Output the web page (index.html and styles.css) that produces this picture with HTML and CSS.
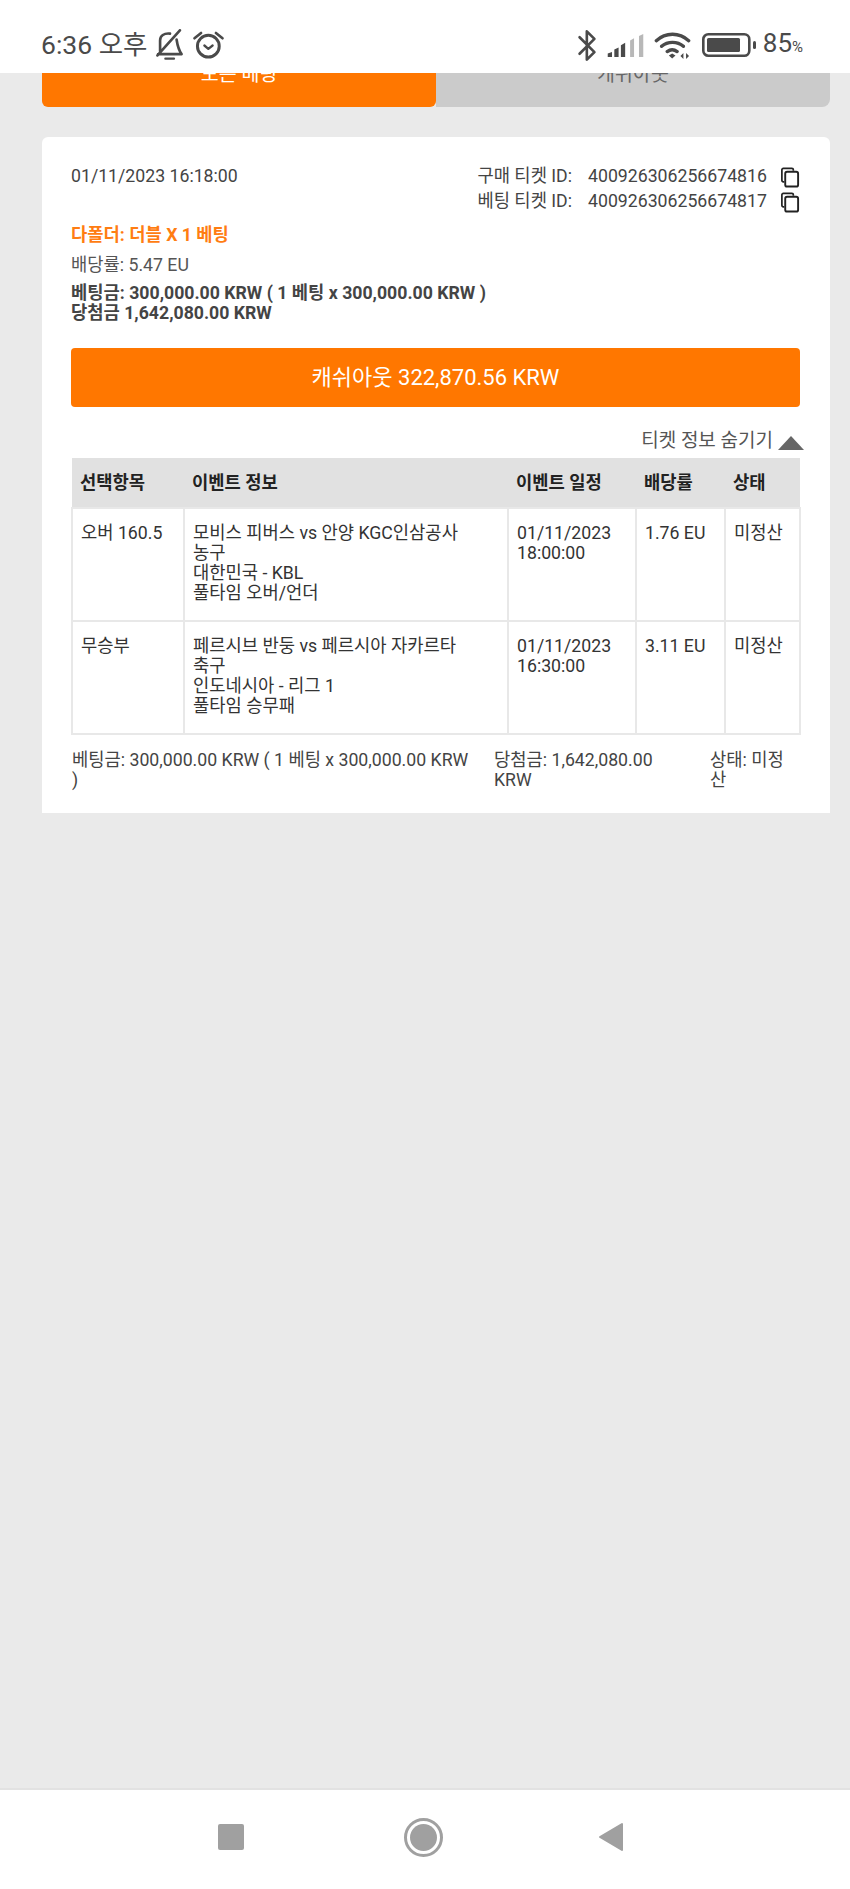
FILE: index.html
```html
<!DOCTYPE html>
<html lang="ko">
<head>
<meta charset="utf-8">
<title>베팅 내역</title>
<link rel="stylesheet" href="styles.css">
</head>
<body>
<div class="app">
  <header class="status">
    <div class="status-left">
      <span class="time">6:36 오후</span>
      <svg class="ic-bell" viewBox="10 10 90 100"><path d="M28 78V45C28 30 40 22 58 24M78 42c2 13 4 28 15 44H22M88 14 20 90" fill="none" stroke="#4a4a4a" stroke-width="8" stroke-linecap="round" stroke-linejoin="round"/><path d="M44 100h26" stroke="#4a4a4a" stroke-width="7" stroke-linecap="round"/></svg>
      <svg class="ic-alarm" viewBox="120 10 105 100"><circle cx="172" cy="62" r="33" fill="none" stroke="#4a4a4a" stroke-width="9"/><path d="m130 38 20-16M215 38l-20-16" stroke="#4a4a4a" stroke-width="8" stroke-linecap="round"/><path d="m160 60 12 10 13-10" fill="none" stroke="#4a4a4a" stroke-width="7" stroke-linecap="round" stroke-linejoin="round"/></svg>
    </div>
    <div class="status-right">
      <svg class="ic-bt" viewBox="15 15 65 100"><path d="m25 40 45 45-23 23V22l23 23-45 45" fill="none" stroke="#4a4a4a" stroke-width="8" stroke-linecap="round" stroke-linejoin="round"/></svg>
      <svg class="ic-signal" viewBox="105 25 118 76"><path d="M110 87l13-4v15h-13zM130 75l13-6v29h-13zM150 62l13-7v43h-13z" fill="#4a4a4a"/><path d="M178 48l12-7v57h-12zM205 34l13-6v70h-13z" fill="#b8b8b8"/></svg>
      <svg class="ic-wifi" viewBox="250 15 115 90"><path d="M257 47c28-26 70-26 98 0M273 64c18-16 48-16 66 0M290 80c9-7 21-7 30 0" fill="none" stroke="#4a4a4a" stroke-width="10" stroke-linecap="round"/><path d="m295 92 10-6 10 6-10 9z" fill="#4a4a4a"/><path d="M339 84v18l-9-9zM347 102V84l9 9z" fill="#4a4a4a"/></svg>
      <svg class="ic-batt" viewBox="0 0 54 24"><rect x="1.300" y="1.300" width="46" height="21.400" rx="5" fill="none" stroke="#4a4a4a" stroke-width="2.600"/><rect x="5" y="5" width="33" height="14" rx="1.500" fill="#4a4a4a"/><rect x="51" y="8" width="3" height="8" rx="1.500" fill="#4a4a4a"/></svg>
      <span class="pct">85<small>%</small></span>
    </div>
  </header>

  <main class="content">
    <nav class="tabs">
      <div class="tab tab-on">모든 베팅</div>
      <div class="tab tab-off">캐쉬아웃</div>
    </nav>

    <section class="card">
      <div class="meta">
        <div class="stamp">01/11/2023 16:18:00</div>
        <div class="ids">
          <div class="id-row">
            <span class="id-label">구매 티켓 ID:</span><span class="id-num">400926306256674816</span>
            <svg class="ic-copy" viewBox="0 0 20 22"><path d="M4 15.500H3a1.500 1.500 0 0 1-1.500-1.500V3A1.500 1.500 0 0 1 3 1.500h9A1.500 1.500 0 0 1 13.500 3v1" fill="none" stroke="#222" stroke-width="1.800"/><rect x="5" y="5" width="13.500" height="15.500" rx="2" fill="#fff" stroke="#222" stroke-width="2"/></svg>
          </div>
          <div class="id-row">
            <span class="id-label">베팅 티켓 ID:</span><span class="id-num">400926306256674817</span>
            <svg class="ic-copy" viewBox="0 0 20 22"><path d="M4 15.500H3a1.500 1.500 0 0 1-1.500-1.500V3A1.500 1.500 0 0 1 3 1.500h9A1.500 1.500 0 0 1 13.500 3v1" fill="none" stroke="#222" stroke-width="1.800"/><rect x="5" y="5" width="13.500" height="15.500" rx="2" fill="#fff" stroke="#222" stroke-width="2"/></svg>
          </div>
        </div>
      </div>

      <div class="bet-type">다폴더: 더블 X 1 베팅</div>
      <div class="odds">배당률: 5.47 EU</div>
      <div class="totals">
        <div>베팅금: 300,000.00 KRW ( 1 베팅 x 300,000.00 KRW )</div>
        <div>당첨금 1,642,080.00 KRW</div>
      </div>

      <button class="cashout" type="button">캐쉬아웃 322,870.56 KRW</button>

      <div class="toggle">
        <span>티켓 정보 숨기기</span>
        <span class="tri"></span>
      </div>

      <table class="legs">
        <colgroup>
          <col class="c1"><col class="c2"><col class="c3"><col class="c4"><col class="c5">
        </colgroup>
        <thead>
          <tr><th>선택항목</th><th>이벤트 정보</th><th>이벤트 일정</th><th>배당률</th><th>상태</th></tr>
        </thead>
        <tbody>
          <tr>
            <td>오버 160.5</td>
            <td>모비스 피버스 vs 안양 KGC인삼공사<br>농구<br>대한민국 - KBL<br>풀타임 오버/언더</td>
            <td>01/11/2023<br>18:00:00</td>
            <td>1.76 EU</td>
            <td>미정산</td>
          </tr>
          <tr>
            <td>무승부</td>
            <td>페르시브 반둥 vs 페르시아 자카르타<br>축구<br>인도네시아 - 리그 1<br>풀타임 승무패</td>
            <td>01/11/2023<br>16:30:00</td>
            <td>3.11 EU</td>
            <td>미정산</td>
          </tr>
        </tbody>
      </table>

      <div class="summary">
        <div>베팅금: 300,000.00 KRW ( 1 베팅 x 300,000.00 KRW )</div>
        <div>당첨금: 1,642,080.00 KRW</div>
        <div>상태: 미정산</div>
      </div>
    </section>
  </main>

  <footer class="navbar">
    <span class="nav-square"></span>
    <span class="nav-home"><span class="nav-dot"></span></span>
    <svg class="nav-back" viewBox="0 0 26 30"><path d="M2 15 24 2v26z" fill="#a0a0a0" stroke="#a0a0a0" stroke-width="2" stroke-linejoin="round"/></svg>
  </footer>
</div>
</body>
</html>
```

FILE: styles.css
```css
* { box-sizing: border-box; }
html, body { margin: 0; height: 100%; }
body {
  font-family: Roboto, "Noto Sans CJK KR", sans-serif;
  font-size: 17.7px;
  line-height: 20px;
  color: #444;
  background: #eaeaea;
}
.app { height: 1889px; display: flex; flex-direction: column; overflow: hidden; }

.status {
  position: relative;
  z-index: 2;
  height: 73px;
  flex: none;
  background: #fff;
  display: flex;
  justify-content: space-between;
  align-items: flex-start;
  padding: 27px 47px 0 41px;
  color: #4a4a4a;
}
.status-left, .status-right { display: flex; align-items: center; height: 36px; }
.time { font-size: 26.500px; line-height: 36px; margin-right: 7px; }
.ic-bell { width: 30px; height: 33px; margin-right: 7px; }
.ic-alarm { width: 35px; height: 33px; }
.ic-bt { width: 22px; height: 33px; margin-right: 8px; }
.ic-signal { width: 39px; height: 25px; margin-right: 9px; }
.ic-wifi { width: 38px; height: 30px; margin-right: 10px; }
.ic-batt { width: 54px; height: 24px; margin-right: 7px; }
.pct { font-size: 26px; line-height: 36px; }
.pct small { font-size: 15px; }

.content { flex: 1; padding: 0 20px 0 42px; }
.tabs { display: flex; height: 64px; margin-top: -30px; margin-bottom: 30px; }
.tab { flex: 1; display: flex; align-items: center; justify-content: center; font-size: 19.500px; }
.tab-on { background: #ff7700; color: #fff; border-radius: 0 0 6px 6px; flex: 0 0 394px; }
.tab-off { background: #cbcbcb; color: #666; border-radius: 0 0 8px 0; }

.card {
  background: #fff;
  border-radius: 6px 6px 0 0;
  height: 676px;
  padding: 29px 30px 0 29px;
}
.meta { display: flex; justify-content: space-between; }
.ids { display: flex; flex-direction: column; gap: 5px; }
.id-row { display: flex; align-items: center; justify-content: flex-end; height: 20px; }
.id-num { margin-left: 16px; width: 192px; }
.ic-copy { width: 20px; height: 21px; flex: none; position: relative; top: 1px; }

.bet-type { margin-top: 14px; color: #ff7d12; font-weight: 700; }
.odds { margin-top: 10px; color: #555; }
.totals { margin-top: 8px; font-weight: 700; }

.cashout {
  display: block;
  width: 100%;
  height: 59px;
  margin-top: 25px;
  border: 0;
  border-radius: 4px;
  background: #ff7700;
  color: #fff;
  font: 400 22px/24px Roboto, "Noto Sans CJK KR", sans-serif;
}

.toggle {
  margin-top: 24px;
  margin-right: -4px;
  height: 27px;
  display: flex;
  justify-content: flex-end;
  align-items: flex-start;
  font-size: 19px;
  color: #555;
}
.tri {
  width: 0;
  height: 0;
  margin: 5px 0 0 5px;
  border-left: 13px solid transparent;
  border-right: 13px solid transparent;
  border-bottom: 14px solid #666;
}

.legs { width: 728px; table-layout: fixed; border-collapse: collapse; color: #333; }
.c1 { width: 112px; }
.c2 { width: 324px; }
.c3 { width: 128px; }
.c4 { width: 89px; }
.c5 { width: 75px; }
.legs th {
  height: 50px;
  padding: 0 8px;
  background: #e1e1e1;
  color: #222;
  font-weight: 700;
  text-align: left;
}
.legs td {
  height: 111px;
  padding: 14px 8px 17px;
  border: 2px solid #e8e8e8;
  vertical-align: top;
}

.summary {
  display: grid;
  grid-template-columns: 422px 216px 91px;
  margin-top: 15px;
  padding-left: 1px;
  color: #444;
}
.summary > div { padding-right: 20px; }
.summary > div:last-child { padding-right: 16px; }

.navbar {
  flex: none;
  height: 101px;
  background: #fff;
  border-top: 2px solid #e2e2e2;
  display: flex;
  align-items: center;
  padding: 0 226px 5px 218px;
  justify-content: space-between;
}
.nav-square { width: 26px; height: 26px; border-radius: 2px; background: #a0a0a0; }
.nav-home {
  width: 39px;
  height: 39px;
  margin-left: 4px;
  border-radius: 50%;
  border: 3px solid #a0a0a0;
  display: flex;
  align-items: center;
  justify-content: center;
}
.nav-dot { width: 27px; height: 27px; border-radius: 50%; background: #a0a0a0; }
.nav-back { width: 26px; height: 30px; }
```
